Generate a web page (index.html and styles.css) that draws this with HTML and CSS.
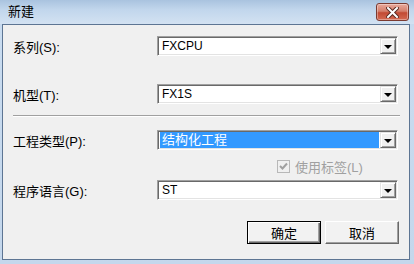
FILE: index.html
```html
<!DOCTYPE html>
<html lang="zh">
<head>
    <title>新建</title>
    <meta charset="UTF-8">
    <link rel="stylesheet" href="styles.css">
</head>
<body>
    <div class="window">
        <div class="titlebar">
            <span class="title">新建</span>
            <span class="close">
                <svg width="13" height="11" viewBox="0 0 13 11">
                    <path d="M2 1 L11 10 M11 1 L2 10" stroke="#5a2a22" stroke-width="4" stroke-linecap="square"/>
                    <path d="M2 1 L11 10 M11 1 L2 10" stroke="#fff" stroke-width="2" stroke-linecap="square"/>
                </svg>
            </span>
        </div>
        <div class="client">
            <div class="row first">
                <span class="label">系列(S):</span>
                <div class="combo"><span class="value">FXCPU</span><span class="arrow"></span></div>
            </div>
            <div class="row">
                <span class="label">机型(T):</span>
                <div class="combo"><span class="value">FX1S</span><span class="arrow"></span></div>
            </div>
            <div class="sep"></div>
            <div class="row">
                <span class="label">工程类型(P):</span>
                <div class="combo"><span class="value selected">结构化工程</span><span class="arrow"></span></div>
            </div>
            <div class="check-row">
                <span class="check">
                    <svg width="9" height="9" viewBox="0 0 9 9"><path d="M1 4 L3.5 6.5 L8 1.5" stroke="#a0a0a0" stroke-width="2" fill="none"/></svg>
                </span>
                <span class="check-label">使用标签(L)</span>
            </div>
            <div class="row">
                <span class="label">程序语言(G):</span>
                <div class="combo"><span class="value">ST</span><span class="arrow"></span></div>
            </div>
            <div class="buttons">
                <span class="btn default">确定</span>
                <span class="btn">取消</span>
            </div>
        </div>
    </div>
</body>
</html>
```

FILE: styles.css
```css
body {
    margin: 0;
    font-family: "Liberation Sans", "Noto Sans CJK SC", sans-serif;
    font-size: 13px;
    color: #000;
}
.window {
    width: 414px;
    height: 264px;
    box-sizing: border-box;
    background: linear-gradient(#b9d1ea, #c9dcf0 30px, #c4d7ec);
    padding: 0 4px 4px 2px;
    display: flex;
    flex-direction: column;
}
.titlebar {
    height: 24px;
    display: flex;
    align-items: center;
    justify-content: space-between;
    padding: 0 0 2px 6px;
    background: linear-gradient(#a9c3df, #c1d6ec 40%, #d3e2f2);
    margin: 0 -4px 0 -2px;
    padding-left: 8px;
    padding-right: 5px;
    box-sizing: border-box;
}
.title {
    font-size: 13px;
    line-height: 16px;
    margin-top: 2px;
}
.close {
    width: 31px;
    height: 16px;
    margin-top: 2px;
    border: 1px solid #7b3a30;
    border-radius: 3px;
    background: linear-gradient(#e9a99c, #d47f6c 45%, #c24a33 55%, #d46a52);
    display: flex;
    align-items: center;
    justify-content: center;
    box-shadow: inset 0 0 0 1px rgba(255, 255, 255, 0.35);
}
.client {
    flex: 1;
    background: #f0f0f0;
    border: 1px solid #5d7593;
    padding: 11px 9px 0 10px;
    display: flex;
    flex-direction: column;
}
.row {
    display: flex;
    align-items: center;
    height: 20px;
    margin-top: 28px;
}
.row.first {
    margin-top: 0;
}
.label {
    width: 144px;
}
.combo {
    width: 241px;
    height: 20px;
    box-sizing: border-box;
    background: #fff;
    border: 1px solid;
    border-color: #a0a0a0 #fff #fff #a0a0a0;
    box-shadow: inset 1px 1px 0 #696969, inset -1px -1px 0 #e3e3e3;
    display: flex;
    padding: 1px 1px 1px 1px;
}
.value {
    flex: 1;
    font-size: 12px;
    line-height: 16px;
    padding-left: 2px;
    margin-left: 1px;
    margin-right: 1px;
}
.value.selected {
    background: #3399ff;
    color: #fff;
    font-size: 13px;
}
.arrow {
    width: 16px;
    height: 16px;
    box-sizing: border-box;
    background: #f0f0f0;
    border: 1px solid;
    border-color: #e3e3e3 #696969 #696969 #e3e3e3;
    box-shadow: inset 1px 1px 0 #fff, inset -1px -1px 0 #a0a0a0;
    display: flex;
    align-items: center;
    justify-content: center;
}
.arrow::after {
    content: "";
    border-left: 4px solid transparent;
    border-right: 4px solid transparent;
    border-top: 4px solid #000;
    margin-top: 1px;
}
.sep {
    height: 1px;
    background: #a0a0a0;
    border-bottom: 1px solid #fff;
    margin: 11px 0 0 0;
}
.row + .sep + .row {
    margin-top: 13px;
}
.check-row {
    display: flex;
    align-items: center;
    height: 14px;
    margin: 9px 0 0 264px;
    color: #a0a0a0;
}
.check {
    width: 13px;
    height: 13px;
    box-sizing: border-box;
    border: 1px solid #b8b8b8;
    background: #f0f0f0;
    display: flex;
    align-items: center;
    justify-content: center;
}
.check-label {
    margin-left: 5px;
}
.check-row + .row {
    margin-top: 7px;
}
.buttons {
    display: flex;
    justify-content: flex-end;
    gap: 4px;
    margin-top: 21px;
    padding-right: 1px;
}
.btn {
    width: 74px;
    height: 23px;
    box-sizing: border-box;
    display: flex;
    align-items: center;
    justify-content: center;
    background: #f2f2f2;
    border: 1px solid;
    border-color: #fff #696969 #696969 #fff;
    box-shadow: inset -1px -1px 0 #a0a0a0;
}
.btn.default {
    border-color: #000;
    box-shadow: inset 1px 1px 0 #fff, inset -1px -1px 0 #696969, inset -2px -2px 0 #a0a0a0;
}
```
